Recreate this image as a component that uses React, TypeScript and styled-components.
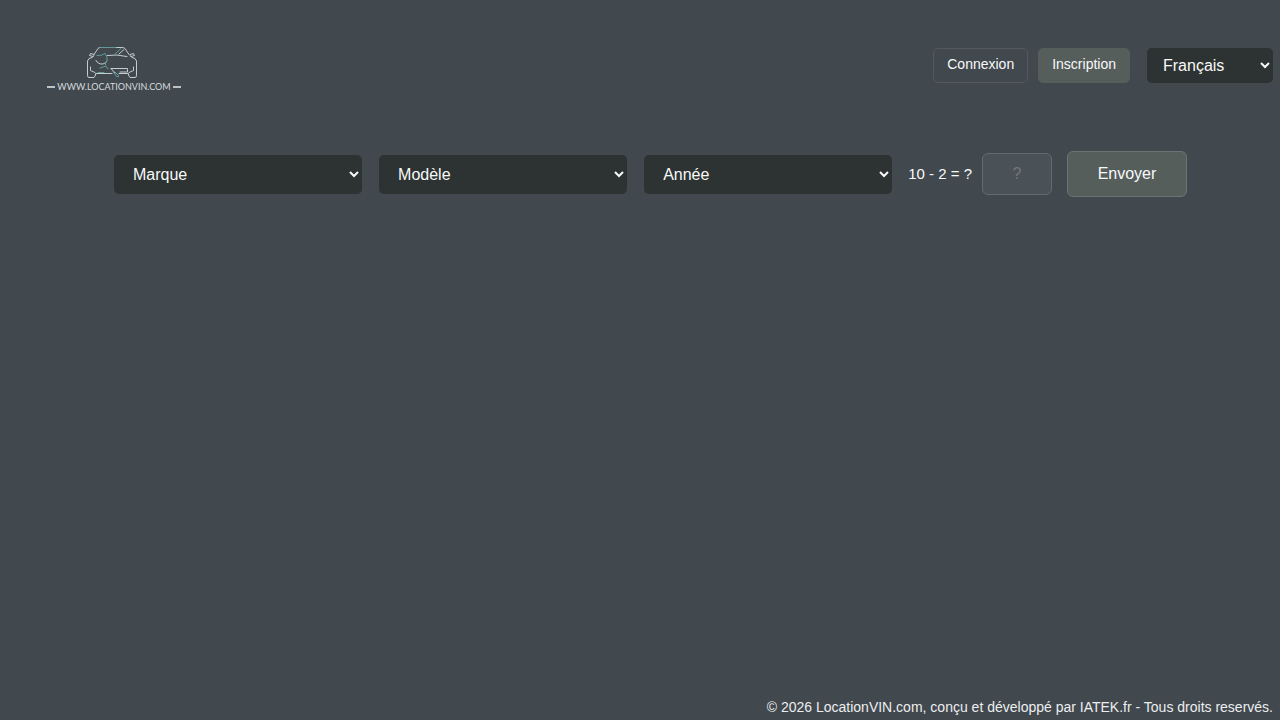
import React from "react";
import styled, { createGlobalStyle } from "styled-components";

const GlobalStyle = createGlobalStyle`
  *, *::before, *::after { box-sizing: border-box; }
  body {
    margin: 0;
    background: #41484e;
    color: #f8f9f9;
    font-family: "Liberation Sans", Arial, sans-serif;
  }
`;

const Page = styled.div`
  display: flex;
  flex-direction: column;
  min-height: 100vh;
`;

const Header = styled.header`
  display: flex;
  align-items: center;
  justify-content: space-between;
  min-height: 131px;
  padding: 0 7px 0 48px;
`;

const LogoLink = styled.a`
  display: flex;
  flex-direction: column;
  align-items: center;
  width: 132px;
  padding-top: 8px;
  color: #d5dbdf;
  text-decoration: none;
`;

const CarIcon = styled.svg`
  display: block;
  width: 52px;
  height: 34px;
  margin-right: 4px;
  fill: none;
  stroke-linecap: round;
  stroke-linejoin: round;
`;

const LogoText = styled.span`
  display: flex;
  align-items: center;
  justify-content: center;
  gap: 2px;
  font-family: Lato, sans-serif;
  font-size: 9px;
  line-height: 14px;
  white-space: nowrap;

  &::before,
  &::after {
    content: "";
    width: 8px;
    height: 2px;
    background: #bcc3c7;
  }
`;

const Nav = styled.nav`
  display: flex;
  align-items: center;
`;

const NavButton = styled.button<{ $filled?: boolean }>`
  height: 35px;
  margin-right: ${(p) => (p.$filled ? "17px" : "10px")};
  padding: 0 13px 3px;
  border: 1px solid ${(p) => (p.$filled ? "#565e5c" : "#53595d")};
  border-radius: 5px;
  background: ${(p) => (p.$filled ? "#565e5c" : "transparent")};
  color: #f8f9f9;
  font: 14px "Liberation Sans", Arial, sans-serif;
  cursor: pointer;
`;

const Select = styled.select`
  border: 0;
  border-radius: 5px;
  background: #2c3332;
  color: #f8f9f9;
  font: 16px "Liberation Sans", Arial, sans-serif;
`;

const LanguageSelect = styled(Select)`
  width: 126px;
  height: 35px;
  padding: 0 0 0 12px;
`;

const SearchForm = styled.form`
  display: flex;
  align-items: center;
  padding: 20px 93px 0 114px;
`;

const VehicleSelect = styled(Select)`
  flex: 1;
  min-width: 0;
  height: 39px;
  margin-right: 17px;
  padding: 0 0 0 15px;
`;

const CaptchaLabel = styled.label`
  margin: 0 10px 0 -1px;
  padding-bottom: 2px;
  font-size: 15px;
  white-space: nowrap;
`;

const CaptchaInput = styled.input`
  width: 70px;
  height: 42px;
  margin-right: 15px;
  border: 1px solid #646b70;
  border-radius: 6px;
  background: #4b5257;
  color: #f8f9f9;
  font: 16px "Liberation Sans", Arial, sans-serif;
  text-align: center;

  &::placeholder { color: #71777b; }
`;

const SubmitButton = styled.button`
  width: 120px;
  height: 46px;
  padding: 0;
  border: 1px solid #6c7373;
  border-radius: 6px;
  background: #565e5c;
  color: #f8f9f9;
  font: 16px "Liberation Sans", Arial, sans-serif;
  cursor: pointer;
`;

const Footer = styled.footer`
  margin-top: auto;
  padding: 0 7px 4px;
  color: #eceeef;
  font-size: 14px;
  line-height: 18px;
  text-align: right;
`;

function Logo() {
  return (
    <LogoLink href="#" aria-label="www.locationvin.com">
      <CarIcon viewBox="0 0 52 34" aria-hidden="true">
        <g stroke="#c4cdce" strokeWidth="1">
          <path d="M8 8.5 12 2.5Q13 1.5 14 1.5H36Q38 1.5 39 2.5L43 8.5" />
          <path d="M8 9.5Q7 12 3 12.5L1.5 15V29.5Q1.5 31.5 3 31.5H8L9.5 29V27.5H26" />
          <path d="M44 9.5Q45 12 49 12.5L50.5 15V29.5Q50.5 31.5 49 31.5H44L42.5 29V27.5H33" />
          <path d="M7 10.5 3.5 9.5 4.5 7.5 8 8.5M45 10.5 48.5 9.5 47.5 7.5 44 8.5" />
          <path d="M21 9.5Q31 8 41 10.5M4.5 21V24.5L9 26.5M47.5 21V24.5L43 26.5" />
          <path d="M10 14.5Q12 18.5 17 18 20 17 21 15M25 22.5H41.5V26H34M25 22.5 29 27" />
          <path d="M33 8 38 3.5" />
        </g>
        <g stroke="#5f9b9a" strokeWidth="1">
          <path d="M14 1.5H30M29 8 35 2.5M11 9.5Q16 10 19 7.5 22 11 21 15 19 17 19.5 19M14 22 20 20 22 23M12 26.5H18" />
          <path d="M27 25.5 31 31 33 30 29 26" />
        </g>
      </CarIcon>
      <LogoText>WWW.LOCATIONVIN.COM</LogoText>
    </LogoLink>
  );
}

export default function App() {
  return (
    <Page>
      <GlobalStyle />
      <Header>
        <Logo />
        <Nav>
          <NavButton type="button">Connexion</NavButton>
          <NavButton type="button" $filled>Inscription</NavButton>
          <LanguageSelect aria-label="Langue">
            <option>Français</option>
            <option>English</option>
          </LanguageSelect>
        </Nav>
      </Header>
      <main>
        <SearchForm onSubmit={(e) => e.preventDefault()}>
          <VehicleSelect aria-label="Marque"><option>Marque</option></VehicleSelect>
          <VehicleSelect aria-label="Modèle"><option>Modèle</option></VehicleSelect>
          <VehicleSelect aria-label="Année"><option>Année</option></VehicleSelect>
          <CaptchaLabel htmlFor="captcha">10 - 2 = ?</CaptchaLabel>
          <CaptchaInput id="captcha" type="text" placeholder="?" />
          <SubmitButton type="submit">Envoyer</SubmitButton>
        </SearchForm>
      </main>
      <Footer>© 2026 LocationVIN.com, conçu et développé par IATEK.fr - Tous droits reservés.</Footer>
    </Page>
  );
}
